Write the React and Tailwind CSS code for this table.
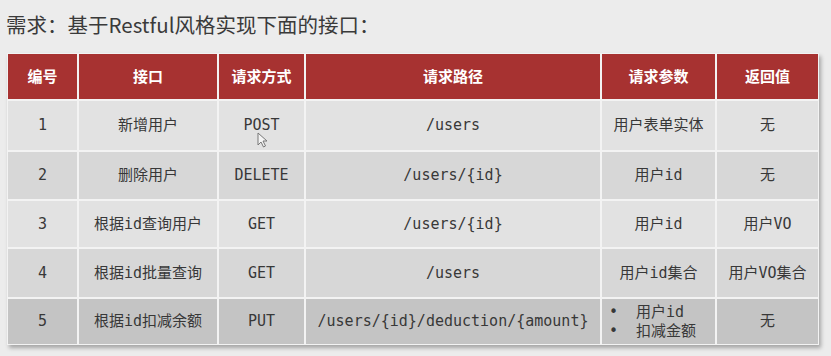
import React from 'react';

const cols = 'grid grid-cols-[69px_138px_85px_294px_113px_101px] gap-[2px]';
const font = { fontFamily: '"DejaVu Sans Mono", "Noto Sans CJK SC", monospace' };

const rows = [
  { no: '1', name: '新增用户', method: 'POST', path: '/users', params: '用户表单实体', ret: '无', bg: 'bg-[#e2e2e2]', h: 'h-[49px]' },
  { no: '2', name: '删除用户', method: 'DELETE', path: '/users/{id}', params: '用户id', ret: '无', bg: 'bg-[#d7d7d7]', h: 'h-[47px]' },
  { no: '3', name: '根据id查询用户', method: 'GET', path: '/users/{id}', params: '用户id', ret: '用户VO', bg: 'bg-[#e2e2e2]', h: 'h-[46px]' },
  { no: '4', name: '根据id批量查询', method: 'GET', path: '/users', params: '用户id集合', ret: '用户VO集合', bg: 'bg-[#d7d7d7]', h: 'h-[48px]' },
  { no: '5', name: '根据id扣减余额', method: 'PUT', path: '/users/{id}/deduction/{amount}', params: null, ret: '无', bg: 'bg-[#c4c4c4]', h: 'h-[45px]' },
];

function Cell({ children, className = '' }) {
  return <div className={`flex items-center justify-center whitespace-nowrap ${className}`}>{children}</div>;
}

export default function App() {
  return (
    <div className="w-[831px] h-[356px] bg-[#ececec] pl-[6px] pt-[8px] overflow-hidden">
      <h1 className="text-[20.5px] leading-[32px] text-[#3a3a3a] font-normal" style={{ fontFamily: '"Noto Sans CJK SC", "Noto Sans", sans-serif' }}>
        需求：基于Restful风格实现下面的接口：
      </h1>
      <div className="mt-[13px] ml-[1px] w-[812px] bg-[#f3f3f3] p-[1px] flex flex-col gap-[2px] shadow-[2px_3px_4px_rgba(0,0,0,0.3)] relative" style={font}>
        <div className={`${cols} h-[45px] text-white font-bold text-[15px]`} style={{ fontFamily: '"Noto Sans CJK SC", sans-serif' }}>
          {['编号', '接口', '请求方式', '请求路径', '请求参数', '返回值'].map(t => (
            <Cell key={t} className="bg-[#a73231]">{t}</Cell>
          ))}
        </div>
        {rows.map(r => (
          <div key={r.no} className={`${cols} ${r.h} text-[15px] text-[#383838]`}>
            <Cell className={r.bg}>{r.no}</Cell>
            <Cell className={r.bg}>{r.name}</Cell>
            <Cell className={r.bg}>{r.method}</Cell>
            <Cell className={r.bg}>{r.path}</Cell>
            <Cell className={r.bg}>
              {r.params ? r.params : (
                <ul className="w-full pl-[7px] leading-[19px] flex flex-col">
                  <li className="flex"><span className="w-[27px]">•</span>用户id</li>
                  <li className="flex"><span className="w-[27px]">•</span>扣减金额</li>
                </ul>
              )}
            </Cell>
            <Cell className={r.bg}>{r.ret}</Cell>
          </div>
        ))}
        <svg className="absolute left-[250px] top-[79px]" width="12" height="16" viewBox="0 0 12 16">
          <path d="M1 1 L1 13 L4 10 L6.5 15 L8.5 14 L6 9 L10 9 Z" fill="#f4f4f4" stroke="#777" strokeWidth="1" strokeLinejoin="round" />
        </svg>
      </div>
    </div>
  );
}
